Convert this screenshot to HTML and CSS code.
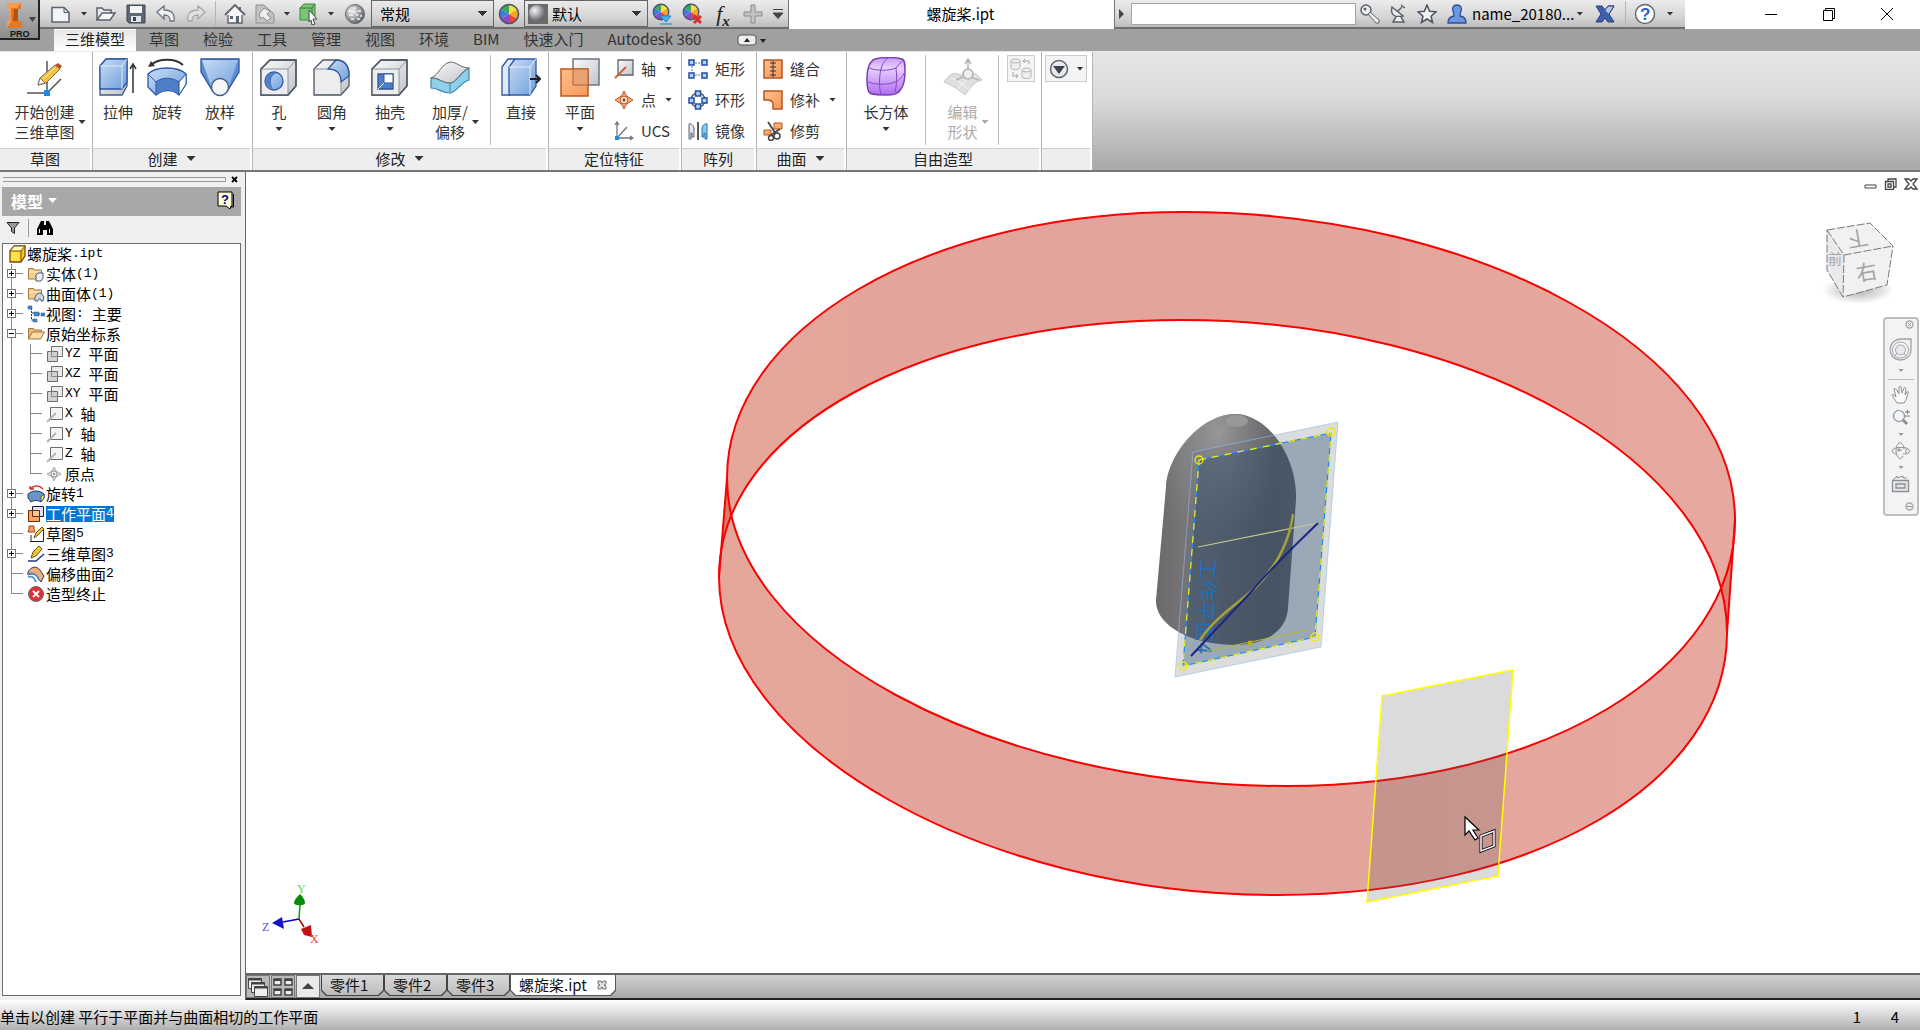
FILE: index.html
```
<!DOCTYPE html>
<html lang="zh-CN">
<head>
<meta charset="utf-8">
<title>螺旋桨.ipt</title>
<link rel="stylesheet" href="styles.css">
</head>
<body>
<svg class="defs" width="0" height="0" aria-hidden="true">
  <defs>
    <linearGradient id="gBlue" x1="0" y1="0" x2="1" y2="1"><stop offset="0" stop-color="#c9dcf3"/><stop offset="1" stop-color="#6f9fdb"/></linearGradient>
    <linearGradient id="gGrey" x1="0" y1="0" x2="1" y2="1"><stop offset="0" stop-color="#fbfbfb"/><stop offset="1" stop-color="#bfc3c9"/></linearGradient>
    <linearGradient id="gOrange" x1="0" y1="0" x2="1" y2="1"><stop offset="0" stop-color="#ffbe8a"/><stop offset="1" stop-color="#f5995a"/></linearGradient>
    <linearGradient id="gPurple" x1="0" y1="0" x2="0" y2="1"><stop offset="0" stop-color="#c79af5"/><stop offset=".3" stop-color="#e6d0ff"/><stop offset="1" stop-color="#b06cf0"/></linearGradient>
    <radialGradient id="gBall" cx=".35" cy=".35" r=".7"><stop offset="0" stop-color="#f4f4f4"/><stop offset="1" stop-color="#5c6066"/></radialGradient>
    <symbol id="wheel" viewBox="0 0 22 22"><circle cx="11" cy="11" r="9.5" fill="#fff"/><path d="M11 11V1.500A9.500 9.500 0 0 0 2.800 6.200z" fill="#3fa55b"/><path d="M11 11 2.800 6.200A9.500 9.500 0 0 0 2.800 15.800z" fill="#3c7ee0"/><path d="M11 11 2.800 15.800A9.500 9.500 0 0 0 11 20.500z" fill="#8a4bd0"/><path d="M11 11V20.500A9.500 9.500 0 0 0 19.200 15.800z" fill="#ea4535"/><path d="M11 11 19.200 15.800A9.500 9.500 0 0 0 19.200 6.200z" fill="#f6a623"/><path d="M11 11 19.200 6.200A9.500 9.500 0 0 0 11 1.500z" fill="#f7e03c"/><circle cx="11" cy="11" r="9.500" fill="none" stroke="#4a5568" stroke-width="1.600"/></symbol>
    <symbol id="folder" viewBox="0 0 18 18"><path d="M1.500 14V3.500h5l1 1.500h7V14z" fill="#f4cd8b" stroke="#a07848"/><path d="M2 7h12" stroke="#fff0cf"/></symbol>
    <symbol id="plane-s" viewBox="0 0 18 18"><path d="M5.500 1.500h11v10h-11z" fill="#ececec" stroke="#6d6d6d"/><path d="M1.500 6.500h10v10h-10z" fill="#d2d2d2" stroke="#6d6d6d"/><path d="M5.500 6.500v5h6" fill="none" stroke="#8a8a8a"/></symbol>
    <symbol id="axis-s" viewBox="0 0 18 18"><path d="M4.500 2.500h12v12h-12z" fill="#f4f4f4" stroke="#6d6d6d"/><path d="M1 17 10 8" stroke="#b5b5b5" stroke-width="2"/></symbol>
  </defs>
</svg>

<div class="app">
  <header class="top">
    <button class="app-btn" aria-label="应用程序菜单">
      <svg width="36" height="38" viewBox="0 0 36 38"><path d="M7 3h14v6h-3v12h4v7H7v-7h3V9H7z" fill="#e87722"/><path d="M7 3h14l-4 5h-6v14l-4 6v-7h3V9H7z" fill="#f89a4e"/><path d="M14 9h4v12h-5z" fill="#b9500f"/><path d="M29 17h7l-3.500 5z" fill="#444"/><text x="10" y="37" class="pro">PRO</text></svg>
    </button>
    <div class="titlebar">
      <div class="qat">
        <button class="ic wide" aria-label="新建"><svg width="20" height="20"><path d="M1 3.500h12l5 5V18H1z" fill="#f2f4f6" stroke="#5b6270" stroke-width="1.500"/><path d="M13 3.500v5h5" fill="none" stroke="#5b6270"/></svg></button>
        <button class="ic car" aria-label="新建选项"><i class="caret sm"></i></button>
        <button class="ic" aria-label="打开"><svg width="22" height="20"><path d="M2 16V4h5l2 2h7v3" fill="#e8eaee" stroke="#5b6270" stroke-width="1.500"/><path d="M2 16 7 9h13l-5 7z" fill="#f8f8f8" stroke="#5b6270" stroke-width="1.500"/></svg></button>
        <button class="ic" aria-label="保存"><svg width="20" height="20"><path d="M1 1h18v18H3l-2-2z" fill="#5d6674" stroke="#3d4450"/><path d="M4 2h12v7H4z" fill="#f4f5f7"/><path d="M5 12h10v6H5z" fill="#e2e5e9"/><path d="M7 13h3v4H7z" fill="#3d4450"/></svg></button>
        <button class="ic" aria-label="撤消"><svg width="20" height="20"><path d="M1 8 8 2v4c8 0 11 4 10 11h-4c0-5-2-6-6-6v4z" fill="#f2f2f2" stroke="#6b7280" stroke-width="1.300"/></svg></button>
        <button class="ic" aria-label="重做"><svg width="20" height="20"><path d="M19 8 12 2v4C4 6 1 10 2 17h4c0-5 2-6 6-6v4z" fill="#e2e2e2" stroke="#a5a8ad" stroke-width="1.300"/></svg></button>
        <span class="vsep"></span>
        <button class="ic" aria-label="主页"><svg width="22" height="20"><path d="M4 10v9h14v-9" fill="#f5f5f5" stroke="#5b6270" stroke-width="1.400"/><path d="M1 11 11 1l10 10M16 3v4" fill="#f5f5f5" stroke="#5b6270" stroke-width="1.800"/><path d="M12 12h3v7h-3zM6 12h3v3H6z" fill="#5b6270"/></svg></button>
        <button class="ic" aria-label="更新"><svg width="20" height="20"><path d="M1 1h8l10 9v9H1z" fill="#c2c2c2" stroke="#909090"/><path d="m4 10 5-6 6 3-3 3 4 4-4 3-4-4-2 2z" fill="#eee" stroke="#8a8a8a"/></svg></button>
        <button class="ic car" aria-label="更新选项"><i class="caret sm"></i></button>
        <button class="ic" aria-label="选择"><svg width="20" height="22"><path d="M1 5 5 1h11v12l-3 4H1z" fill="#7cc576" stroke="#3a8a3a"/><path d="M1 5h12v12M13 5l3-4" fill="none" stroke="#2f7a35"/><path d="m10 7 8 9h-4l2 5-3 1-1-5-2 2z" fill="#fff" stroke="#444"/></svg></button>
        <button class="ic car" aria-label="选择选项"><i class="caret sm"></i></button>
        <button class="ic wide" aria-label="材料"><svg width="22" height="22"><circle cx="11" cy="11" r="9.500" fill="url(#gBall)" stroke="#646a73"/><path d="M4 8h3m2-3h3m2 3h3M5 12h4m3 0h2m2 1h2M7 16h3m3 0h3M10 9h2" stroke="#f3f3f3" stroke-width="1.500"/></svg></button>
        <select class="combo" aria-label="材料"><option>常规</option></select>
        <button class="ic" aria-label="外观"><svg width="22" height="22"><use href="#wheel"/></svg></button>
        <span class="swatch"><svg width="20" height="20"><path d="M0 0h20v20H0z" fill="#6a6a6a"/><circle cx="9" cy="9" r="8" fill="url(#gBall)"/></svg></span>
        <select class="combo second" aria-label="外观"><option>默认</option></select>
        <button class="ic" aria-label="调整"><svg width="22" height="22"><use href="#wheel" width="18" height="18"/><path d="M8 13h11l-5 6zM8 21h12" fill="#49b4e6" stroke="#1a84c0"/></svg></button>
        <button class="ic" aria-label="清除"><svg width="22" height="22"><use href="#wheel" width="18" height="18"/><path d="m12 13 7 7m0-7-7 7" stroke="#d3302c" stroke-width="3"/></svg></button>
        <button class="ic fx" aria-label="参数"><em>f<sub>x</sub></em></button>
        <button class="ic" aria-label="添加"><svg width="20" height="20"><path d="M8 1h4v7h7v4h-7v7H8v-7H1V8h7z" fill="#c3c3c3" stroke="#8a8a8a"/></svg></button>
        <button class="ic more" aria-label="自定义"><svg width="12" height="12"><path d="M1 1.500h10M1 5h10l-5 5.500z" fill="#444" stroke="#444"/></svg></button>
      </div>
      <h1>螺旋桨.ipt</h1>
      <div class="info">
        <svg class="tri" width="6" height="10"><path d="M0 0v10l5-5z" fill="#444"/></svg>
        <input type="text" aria-label="搜索">
        <button class="ic" aria-label="密钥"><svg width="20" height="20"><circle cx="6" cy="6" r="5" fill="#eee" stroke="#5b6270" stroke-width="1.500"/><circle cx="5" cy="5" r="1.500" fill="#5b6270"/><path d="m8 10 8 9h3v-3L10 8z" fill="#eee" stroke="#5b6270"/></svg></button>
        <button class="ic" aria-label="通讯中心"><svg width="20" height="20"><path d="M4 3c-2 8 3 11 11 9zM9 8l5-5M13 1l4 3" fill="#eee" stroke="#5b6270" stroke-width="1.500"/><path d="m8 13-3 5h11l-3-5" fill="#eee" stroke="#5b6270" stroke-width="1.500"/></svg></button>
        <button class="ic" aria-label="收藏夹"><svg width="20" height="20"><path d="m10 1 2.600 6.300 6.400.5-5 4.400 1.600 6.300L10 15l-5.600 3.500L6 12.200 1 7.800l6.400-.5z" fill="#f3f3f3" stroke="#4b5362" stroke-width="1.500"/></svg></button>
        <button class="ic" aria-label="用户"><svg width="20" height="20"><path d="M10 1c4 0 5 3 4 6-.5 2-1 3-1 5 4 .5 6 3 6 7H1c0-4 2-6.500 6-7 0-2-.5-3-1-5-1-3 0-6 4-6z" fill="#6d97e0" stroke="#2e4f93" stroke-width="1.300"/></svg></button>
        <button class="user">name_20180...<i class="caret sm"></i></button>
        <button class="ic wide" aria-label="Exchange"><svg width="20" height="20"><path d="M1 2h6l3 4 3-4h6l-5 8 5 8h-6l-3-4-3 4H1l5-8z" fill="#3c5fae" stroke="#2a3f78"/><path d="m10 6 3-4h6l-5 8" fill="#b9c6e4" stroke="#2a3f78"/></svg></button>
        <span class="vsep"></span>
        <button class="ic" aria-label="帮助"><svg width="22" height="22"><circle cx="11" cy="11" r="9.500" fill="#fff" stroke="#5b6270" stroke-width="1.400"/><text x="6" y="17" class="q">?</text></svg></button>
        <button class="ic more" aria-label="帮助选项"><i class="caret sm"></i></button>
      </div>
      <div class="winbtns">
        <button aria-label="最小化"><svg width="14" height="14"><path d="M1 7.500h12" stroke="#000"/></svg></button>
        <button aria-label="还原"><svg width="14" height="14"><path d="M1.500 3.500h9v10h-9zM3.500 3V1.500h9v10H11" fill="none" stroke="#000"/></svg></button>
        <button aria-label="关闭"><svg width="14" height="14"><path d="m1 1 12 12m0-12L1 13" stroke="#000"/></svg></button>
      </div>
    </div>
    <nav class="tabs">
      <button class="on">三维模型</button><button>草图</button><button>检验</button><button>工具</button><button>管理</button><button>视图</button><button>环境</button><button>BIM</button><button>快速入门</button><button>Autodesk 360</button>
      <button class="mini" aria-label="最小化功能区"><svg width="36" height="14"><rect x="5" y="2" width="18" height="10" rx="3" fill="#eee" stroke="#555"/><path d="m11 9 3-4 3 4zM27 6h6l-3 4z" fill="#222"/></svg></button>
    </nav>
  </header>

  <section class="ribbon">
    <div class="panel p1">
      <div class="body">
        <button class="big"><svg width="40" height="40"><path d="M22 4v34M2 36h20L36 22" fill="none" stroke="#555" stroke-width="1.500"/><path d="m13 28 2-7L30 8l5 4-14 14z" fill="#f5c243" stroke="#7b6a4a"/><path d="m30 8 3-2 4 3-2 3z" fill="#b5532e"/><path d="m13 28 2-7 5 5z" fill="#fff" stroke="#7b6a4a"/><path d="m18 22 12-11" stroke="#fff0b0"/><path d="M19 33h6v6h-6z" fill="#1e88e5"/></svg><span class="cap"><span>开始创建<br>三维草图</span><i class="caret sm"></i></span></button>
      </div>
      <div class="foot">草图</div>
    </div>
    <div class="panel p2">
      <div class="body">
        <button class="big"><svg width="40" height="40"><path d="m2 9 6-7h21v27l-5 9H2z" fill="url(#gGrey)" stroke="#3c5a8e" stroke-width="1.300"/><path d="m2 9 6-7h21v23l-5 7H2z" fill="url(#gBlue)" stroke="#2f56a3" stroke-width="1.300"/><path d="M2 9h22v23M24 9l5-7" fill="none" stroke="#dceafb"/><path d="M35 36V8m-3 4 3-5 3 5" fill="none" stroke="#333" stroke-width="1.500"/></svg><span class="cap">拉伸</span></button>
        <button class="big"><svg width="40" height="40"><path d="M4 8C12 1 28 1 36 8" fill="none" stroke="#333" stroke-width="2"/><path d="m1 10 3-6 4 5z" fill="#333"/><path d="M1 17c8-8 30-8 38 0v10l-7 11c-6-6-16-6-23 0L1 30z" fill="url(#gBlue)" stroke="#2f56a3" stroke-width="1.300"/><path d="m9 25 c6-5 16-5 23 0v13c-6-6-16-6-23 0z" fill="#4f7fc8"/><path d="m1 17 8 8c6-5 16-5 23 0l7-8M9 25v13m23-13v13" fill="none" stroke="#2f56a3"/><path d="m32 25 7-8v10l-7 11z" fill="#fff" stroke="#2f56a3"/></svg><span class="cap">旋转</span></button>
        <button class="big"><svg width="40" height="40"><path d="M1 2h38v13L28 33H12L1 15z" fill="#5f8fd3" stroke="#2f56a3" stroke-width="1.300"/><path d="m2 3 10 29h16L38 3z" fill="url(#gBlue)"/><circle cx="20" cy="30" r="8.500" fill="#f6f6f6" stroke="#3c5a8e" stroke-width="1.300"/></svg><span class="cap">放样</span><i class="caret sm"></i></button>
      </div>
      <div class="foot">创建<i class="caret"></i></div>
    </div>
    <div class="panel p3">
      <div class="body">
        <button class="big"><svg width="40" height="40"><path d="m2 12 9-9h26v26l-8 9H2z" fill="url(#gGrey)" stroke="#4d5666" stroke-width="1.300"/><path d="M2 12h27v26H2z" fill="#ededee"/><path d="M2 12h27v26M29 12l8-9" fill="none" stroke="#8b93a0"/><path d="m2 12 9-9h26v26l-8 9H2z" fill="none" stroke="#4d5666" stroke-width="1.300"/><circle cx="15" cy="24" r="9" fill="url(#gBlue)" stroke="#2f56a3" stroke-width="1.300"/><path d="M8 19a9 9 0 0 1 10-3c-6 2-8 8-4 16-6-1-9-8-6-13z" fill="#4f7fc8"/></svg><span class="cap">孔</span><i class="caret sm"></i></button>
        <button class="big"><svg width="40" height="40"><path d="M2 12 11 3h13c8 0 13 5 13 14v12l-8 9H2z" fill="url(#gGrey)" stroke="#4d5666" stroke-width="1.300"/><path d="M3 12h13c9 0 13 6 13 13v12H3z" fill="#ededee"/><path d="M16 12 24 3c9 0 13 6 13 16l-8 6c0-8-4-13-13-13z" fill="url(#gBlue)" stroke="#2f56a3" stroke-width="1.300"/><path d="M2 12h14M29 25v13" stroke="#8b93a0"/></svg><span class="cap">圆角</span><i class="caret sm"></i></button>
        <button class="big"><svg width="40" height="40"><path d="m2 12 9-9h26v26l-8 9H2z" fill="url(#gGrey)" stroke="#4d5666" stroke-width="1.300"/><path d="M2 12h27v26H2z" fill="#ededee"/><path d="M2 12h27v26M29 12l8-9" fill="none" stroke="#8b93a0"/><path d="m2 12 9-9h26v26l-8 9H2z" fill="none" stroke="#4d5666" stroke-width="1.300"/><path d="M8 17h15v15H8z" fill="#4f7fc8" stroke="#2f56a3" stroke-width="1.300"/><path d="M14 17h9v9h-9z" fill="#fff" stroke="#2f56a3"/><path d="m8 32 6-6" stroke="#fff"/></svg><span class="cap">抽壳</span><i class="caret sm"></i></button>
        <button class="big"><svg width="40" height="40"><path d="M1 21c7-1 11 5 19 5 7-1 10-11 19-15v12c-8 2-12 12-19 13-8 0-12-5-19-5z" fill="#8fcfea" stroke="#3f87ad" stroke-width="1.200"/><path d="M1 21C9 18 11 7 20 5c7 0 11 6 19 6-9 4-12 14-19 15-8 0-12-6-19-5z" fill="url(#gGrey)" stroke="#666"/><path d="M20 26v10" stroke="#3f87ad"/></svg><span class="cap"><span>加厚/<br>偏移</span><i class="caret sm"></i></span></button>
        <span class="rule"></span>
        <button class="big"><svg width="40" height="40"><path d="m1 10 6-8h7v28l-5 8H1z" fill="#dfeaf8" stroke="#2f56a3" stroke-width="1.300"/><path d="m8 10 6-8h21v27l-6 9H8z" fill="url(#gBlue)" stroke="#2f56a3" stroke-width="1.300"/><path d="M8 10h21v28M29 10l6-8" fill="none" stroke="#e5effb"/><path d="M29 22h9m-3-4 4 4-4 4" fill="none" stroke="#222" stroke-width="2"/></svg><span class="cap">直接</span></button>
      </div>
      <div class="foot">修改<i class="caret"></i></div>
    </div>
    <div class="panel p4">
      <div class="body">
        <button class="big"><svg width="40" height="40"><path d="M13 2h26v26H13z" fill="url(#gGrey)" stroke="#6c7684" stroke-width="1.500"/><path d="M1 12h27v27H1z" fill="url(#gOrange)" stroke="#c0561c" stroke-width="1.500"/><path d="M13 12h15v16H13z" fill="#e9a273" stroke="#a5623c"/></svg><span class="cap">平面</span><i class="caret sm"></i></button>
        <div class="smalls">
          <button class="small"><svg width="20" height="20"><path d="M4 1h15v15H4z" fill="url(#gGrey)" stroke="#5b6270" stroke-width="1.300"/><path d="M1 19 12 8" stroke="#d0632a" stroke-width="2"/></svg>轴<i class="caret sm"></i></button>
          <button class="small"><svg width="20" height="20"><path d="m10 1 2.500 5L19 10l-6.500 4L10 19l-2.500-5L1 10l6.500-4z" fill="#f4b183" stroke="#c0561c"/><circle cx="10" cy="10" r="4" fill="#fbe0cc" stroke="#c0561c"/><circle cx="10" cy="10" r="1.500" fill="#8c3c10"/></svg>点<i class="caret sm"></i></button>
          <button class="small"><svg width="20" height="20"><path d="M3 1v16h16M3 17 13 6M1 4l2-3 2 3m11 11 3 2-3 2" fill="none" stroke="#6c7684" stroke-width="1.300"/><path d="M1 15h4v4H1z" fill="#1e88e5"/></svg>UCS</button>
        </div>
      </div>
      <div class="foot">定位特征</div>
    </div>
    <div class="panel p5">
      <div class="body">
        <div class="smalls">
          <button class="small"><svg width="20" height="20"><path d="M4 4h12M4 4v12h12" fill="none" stroke="#777" stroke-dasharray="2 1"/><path d="M1 1h5v5H1zM14 1h5v5h-5zM1 14h5v5H1zM14 14h5v5h-5z" fill="#b8d0f4" stroke="#1f4fae" stroke-width="1.500"/></svg>矩形</button>
          <button class="small"><svg width="20" height="20"><circle cx="10" cy="10" r="7" fill="none" stroke="#555" stroke-width="1.500"/><path d="M7.500 1h5v5h-5zM1 8h5v5H1zM14 8h5v5h-5zM7.500 14h5v5h-5z" fill="#b8d0f4" stroke="#1f4fae" stroke-width="1.500"/></svg>环形</button>
          <button class="small"><svg width="20" height="20"><path d="M1 3c2-1 4 1 5 4v9H4v-4H3v6H1z" fill="#e2e4e7" stroke="#5b6270"/><path d="M19 3c-2-1-4 1-5 4v9h2v-4h1v6h2z" fill="#8ec9f0" stroke="#1f6fae"/><path d="M10 1v18" stroke="#222" stroke-width="1.500"/></svg>镜像</button>
        </div>
      </div>
      <div class="foot">阵列</div>
    </div>
    <div class="panel p6">
      <div class="body">
        <div class="smalls">
          <button class="small"><svg width="20" height="20"><path d="M1 1h18v18H1z" fill="url(#gOrange)" stroke="#b5561f" stroke-width="1.500"/><path d="M10 2v16M7 4h6M7 8h6M7 12h6M7 16h6" stroke="#333"/></svg>缝合</button>
          <button class="small"><svg width="20" height="20"><path d="M1 1h18v18h-9v-6c-1-2-3-3-5-3H1z" fill="url(#gOrange)" stroke="#b5561f" stroke-width="1.500"/></svg>修补<i class="caret sm"></i></button>
          <button class="small"><svg width="20" height="20"><path d="M11 2h8v6h-8zM1 9h7v5H1z" fill="url(#gOrange)" stroke="#b5561f"/><path d="m5 1 8 12M17 8 8 14" stroke="#444" stroke-width="1.800"/><circle cx="14" cy="15" r="3" fill="none" stroke="#444" stroke-width="1.500"/><circle cx="8" cy="17" r="2.500" fill="none" stroke="#444" stroke-width="1.500"/></svg>修剪</button>
        </div>
      </div>
      <div class="foot">曲面<i class="caret"></i></div>
    </div>
    <div class="panel p7">
      <div class="body">
        <button class="big"><svg width="40" height="40"><path d="M9 2c8-2 20-2 27 0 3 1 3 6 3 12s-1 14-4 18c-3 5-7 6-15 6S5 38 3 35 1 28 1 22 2 5 9 2z" fill="url(#gPurple)" stroke="#7a3fb5" stroke-width="1.500"/><path d="M2 25c8 3 20 3 27 0 5-2 8-6 9-9M15 38c-2-8-2-18 0-26 1-5 4-9 7-11M29 35c2-8 2-16 1-24M3 11c8 3 20 3 27 0l6-7" fill="none" stroke="#8748c4"/></svg><span class="cap">长方体</span><i class="caret sm"></i></button>
        <span class="rule"></span>
        <button class="big edit" disabled><svg width="40" height="40"><path d="M1 25c5-7 9-10 14-8 5 3 14-1 18 0l6 6c-7 1-12 8-17 15C16 33 9 28 1 25z" fill="#dfdfdf" stroke="#c3c3c3"/><path d="M8 21c7 2 13 6 18 12M15 33c3-7 10-12 18-14" fill="none" stroke="#f6f6f6"/><path d="M25 14V3m-3 4 3-5 3 5M20 20l-7 3m15-3 8 3" fill="none" stroke="#b5b5b5" stroke-width="1.500"/><circle cx="25" cy="17" r="5" fill="#eee" stroke="#b0b0b0" stroke-width="1.500"/></svg><span class="cap"><span>编辑<br>形状</span><i class="caret sm"></i></span></button>
        <span class="rule"></span>
        <button class="tile" disabled aria-label="转换"><svg width="24" height="24"><g fill="#eee" stroke="#b5b5b5"><path d="M2 4v7c1 2 8 2 9 0V4M13 13v7c1 2 8 2 9 0v-7"/><ellipse cx="6.500" cy="4" rx="4.500" ry="2"/><ellipse cx="17.500" cy="13" rx="4.500" ry="2"/><path d="M20 7V4h-6m2-2-2 2 2 2M4 15v4h5m-2-2 2 2-2 2" fill="none" stroke="#a5a5a5"/></g></svg></button>
      </div>
      <div class="foot">自由造型</div>
    </div>
    <div class="panel p8">
      <div class="body">
        <button class="tile wide" aria-label="更多"><svg width="20" height="20"><circle cx="10" cy="10" r="8.500" fill="#e8eaed" stroke="#5b6270" stroke-width="1.500"/><path d="M4 7h12l-6 8z" fill="#3d4450"/></svg><i class="caret sm"></i></button>
      </div>
      <div class="foot"></div>
    </div>
  </section>

  <main class="work">
    <aside class="side">
      <div class="grip"><span></span><button aria-label="关闭"><svg width="7" height="7"><path d="m1 1 5 5m0-5L1 6" stroke="#000" stroke-width="1.800"/></svg></button></div>
      <div class="side-head"><button>模型<i class="caret"></i></button><button aria-label="帮助"><svg width="18" height="19"><path d="M1 1h14v14h-1l-1 3-4-3H1z" fill="#ffffd0" stroke="#000"/><path d="M16.500 3v13h-3" fill="none" stroke="#000"/><text x="4" y="13" class="hq">?</text></svg></button></div>
      <div class="side-tools"><button aria-label="筛选器"><svg width="14" height="14"><path d="M1 1.500h12L8.500 7v5.500l-3-2V7z" fill="#9a9a9a" stroke="#222"/></svg></button><span></span><button aria-label="查找"><svg width="16" height="14"><path d="M4 0h3v4h2V0h3l4 8v6h-6V9H6v5H0V8z" fill="#000"/><path d="M2.500 8v4M12.500 8v4" stroke="#fff"/></svg></button></div>
      <div class="tree">
        <div class="row root"><svg width="18" height="18"><path d="m2 6 4-5h11v10l-4 6H2z" fill="#f8c81c" stroke="#7a4a10" stroke-width="1.300"/><path d="M2 6h11l4-5H6z" fill="#fff7c0" stroke="#7a4a10"/><path d="M3 7h9v9H3z" fill="#ffe14a"/><path d="M13 6v11" stroke="#7a4a10"/></svg>螺旋桨<b>.ipt</b></div>
        <ul>
          <li><div class="row"><button class="tog" aria-label="展开"></button><svg width="18" height="18"><use href="#folder"/><path d="m9 10 2-2h5v5l-2 3H9z" fill="#e6eef8" stroke="#4a5a70"/></svg>实体<b>(1)</b></div></li>
          <li><div class="row"><button class="tog" aria-label="展开"></button><svg width="18" height="18"><use href="#folder"/><path d="M8 16c-1-5 2-8 6-8l3 4-1 4h-2c0-3-3-3-3 0z" fill="#cfd6df" stroke="#4a5a70"/></svg>曲面体<b>(1)</b></div></li>
          <li><div class="row"><button class="tog" aria-label="展开"></button><svg width="18" height="18"><path d="M4.500 3v12H7M5 8h4M11 9h4" fill="none" stroke="#333" stroke-dasharray="2 1"/><path d="M1 1h4v3H1zM7 7h5v4H7zM14 8h4v3h-4zM6 14h4v3H6z" fill="#3f86cc" stroke="#2a5a90" stroke-width=".5"/></svg>视图<b>: </b>主要</div></li>
          <li><div class="row"><button class="tog open" aria-label="折叠"></button><svg width="18" height="18"><path d="M1.500 14V3.500h5l1 1.500h7v3" fill="#e9bf77" stroke="#a07848"/><path d="m1.500 14 4-7h12l-4 7z" fill="#fbdda3" stroke="#a07848"/></svg>原始坐标系</div>
            <ul>
              <li><div class="row"><svg width="18" height="18"><use href="#plane-s"/></svg><b>YZ </b>平面</div></li>
              <li><div class="row"><svg width="18" height="18"><use href="#plane-s"/></svg><b>XZ </b>平面</div></li>
              <li><div class="row"><svg width="18" height="18"><use href="#plane-s"/></svg><b>XY </b>平面</div></li>
              <li><div class="row"><svg width="18" height="18"><use href="#axis-s"/></svg><b>X </b>轴</div></li>
              <li><div class="row"><svg width="18" height="18"><use href="#axis-s"/></svg><b>Y </b>轴</div></li>
              <li><div class="row"><svg width="18" height="18"><use href="#axis-s"/></svg><b>Z </b>轴</div></li>
              <li><div class="row"><svg width="18" height="18"><path d="m8 2 2 4 5 3-5 3-2 4-2-4-5-3 5-3z" fill="#ddd" stroke="#aaa"/><circle cx="8" cy="9" r="3" fill="#eee" stroke="#999"/><circle cx="8" cy="9" r="1" fill="#777"/></svg>原点</div></li>
            </ul>
          </li>
          <li><div class="row"><button class="tog" aria-label="展开"></button><svg width="18" height="18"><path d="M3 4c4-4 9-4 13 0M3 4V1m0 3h4" fill="none" stroke="#e02020" stroke-width="1.300"/><path d="M1 9c4-4 12-4 16 0v4l-3 4c-3-2-7-2-10 0l-3-4z" fill="#6b93c4" stroke="#1e3a66"/><path d="m14 12 3-3v4l-3 4z" fill="#ffe94a" stroke="#1e3a66" stroke-width=".7"/></svg>旋转<b>1</b></div></li>
          <li><div class="row"><button class="tog" aria-label="展开"></button><svg width="18" height="18"><path d="M5.500 1.500h11v10h-11z" fill="#dfe2f2" stroke="#1a1a40"/><path d="M1.500 5.500h11v11h-11z" fill="#f7a468" stroke="#6b2c00"/><path d="M5.500 5.500h7v6h-7z" fill="#f7c49c" stroke="#6b2c00"/></svg><span class="sel">工作平面<b>4</b></span></div></li>
          <li><div class="row"><svg width="18" height="18"><path d="M3 16.500h13.500V3M4 10v6" fill="none" stroke="#223"/><path d="m7 13 2-5 6-6 2 2-6 6z" fill="#f4c52e" stroke="#665522"/><path d="M2 1h5v3l1 3H1l1-3z" fill="#f0a060" stroke="#b3401c"/></svg>草图<b>5</b></div></li>
          <li><div class="row"><button class="tog" aria-label="展开"></button><svg width="18" height="18"><path d="M1 16h8l8-7" fill="none" stroke="#223a80" stroke-width="1.500"/><path d="m4 13 2-6 6-6 3 3-6 7z" fill="#f4c52e" stroke="#665522"/></svg>三维草图<b>3</b></div></li>
          <li><div class="row"><svg width="18" height="18"><path d="M1 7c3-6 9-6 12-2l4 6-3 6-3-4C9 9 6 8 1 10z" fill="#f2ac78" stroke="#1e3a66"/><path d="M1 12c4-1 6 0 8 5M1 9c6-2 9 1 11 6" fill="none" stroke="#4a90c8" stroke-width="1.800"/></svg>偏移曲面<b>2</b></div></li>
          <li><div class="row"><svg width="18" height="18"><circle cx="9" cy="9" r="7.500" fill="#e03038" stroke="#6b6b6b"/><path d="m6 6 6 6m0-6-6 6" stroke="#fff" stroke-width="2"/></svg>造型终止</div></li>
        </ul>
      </div>
    </aside>

    <section class="doc">
      <div class="canvas">
        <svg class="scene" viewBox="246 172 1674 801" role="img" aria-label="三维视图">
          <defs>
            <linearGradient id="gBody" x1="0" x2="1"><stop offset="0" stop-color="#6c696c"/><stop offset=".2" stop-color="#777578"/><stop offset=".6" stop-color="#646468"/><stop offset=".85" stop-color="#5c5d62"/><stop offset="1" stop-color="#66676b"/></linearGradient>
            <radialGradient id="gDome" cx=".45" cy=".08" r=".5"><stop offset="0" stop-color="#a3a3a5" stop-opacity=".8"/><stop offset="1" stop-color="#8a8a8c" stop-opacity="0"/></radialGradient>
            <linearGradient id="gRing" x1="0" x2="1"><stop offset="0" stop-color="#cc4f37"/><stop offset=".35" stop-color="#c4483a"/><stop offset=".6" stop-color="#c84b38"/><stop offset="1" stop-color="#cf5440"/></linearGradient>
            <radialGradient id="gShade"><stop offset="0" stop-color="#777" stop-opacity=".6"/><stop offset="1" stop-color="#777" stop-opacity="0"/></radialGradient>
          </defs>
          <g fill="url(#gRing)" fill-opacity=".5">
            <path d="M727 478C727 330 924 212 1184 212 1479 212 1735 352 1735 520L1727 633C1727 465 1477 320 1182 320 922 320 719 429 719 577z"/>
            <path d="M727 478C727 646 991 786 1286 786 1546 786 1735 668 1735 520L1727 633C1727 781 1537 895 1277 895 982 895 719 745 719 577z"/>
          </g>
          <g fill="none" stroke="#fa0000" stroke-width="2">
            <path d="M727 478C727 330 924 212 1184 212 1479 212 1735 352 1735 520 1735 668 1546 786 1286 786 991 786 727 646 727 478z"/>
            <path d="M719 577C719 429 922 320 1182 320 1477 320 1727 465 1727 633 1727 781 1537 895 1277 895 982 895 719 745 719 577z"/>
            <path d="M727 478 719 577M1735 520 1727 633"/>
          </g>
          <path d="M1235 414C1202 414 1168 453 1166 487L1156 600C1155 625 1190 645 1236 645 1266 645 1287 630 1288 608L1296 500C1298 458 1268 414 1235 414z" fill="url(#gBody)"/>
          <path d="M1235 414C1202 414 1168 453 1166 487L1156 600C1155 625 1190 645 1236 645 1266 645 1287 630 1288 608L1296 500C1298 458 1268 414 1235 414z" fill="url(#gDome)"/>
          <ellipse cx="1237" cy="421" rx="11" ry="6" fill="#98989a"/>
          <path fill-rule="evenodd" d="M1193 452 1338 422 1321 647 1175 677zM1199 460 1183 666 1315 637 1331 433z" fill="#6b6b6e" fill-opacity=".24"/>
          <path d="M1193 452 1338 422 1321 647 1175 677z" fill="none" stroke="#8fbfec" stroke-opacity=".6"/>
          <path d="M1199 460 1331 433 1315 637 1183 666z" fill="#2e4a66" fill-opacity=".48" stroke="#1e88ff" stroke-width="1.200"/>
          <path d="M1199 460 1331 433 1315 637 1183 666z" fill="none" stroke="#f4f400" stroke-width="1.200" stroke-dasharray="7 6"/>
          <text class="plane-label" transform="translate(1201 558) rotate(93)">工作平面4</text>
          <g fill="none" stroke="#f0ec00" stroke-width="1.300"><circle cx="1199" cy="460" r="4"/><circle cx="1331" cy="432" r="4"/><circle cx="1315" cy="637" r="4"/><circle cx="1183" cy="666" r="4"/></g>
          <path d="M1198 547 1318 523" stroke="#c2c98c" stroke-width="1.200"/>
          <path d="M1207 651 1308 630" stroke="#b9bb2e"/>
          <path d="M1293 514C1288 552 1268 575 1255 588 1240 602 1215 617 1200 640" fill="none" stroke="#a0a23a" stroke-width="2.500"/>
          <circle cx="1250" cy="643" r="2.500" fill="#b9b400"/>
          <path d="M1318 523C1288 552 1265 575 1251 592L1191 656" fill="none" stroke="#1d2586" stroke-width="2"/>
          <path d="M1382 696 1513 670 1498 876 1367 902z" fill="#5d5d5d" fill-opacity=".22" stroke="#ffff00" stroke-width="1.500"/>
          <path d="M1465 817v18l4-4 6 9 3-2-5-8h6z" fill="#fff" stroke="#000" stroke-width="1.200"/>
          <path d="m1481 836 13-5v15l-13 5z" fill="none" stroke="#000" stroke-width="3"/><path d="m1481 836 13-5v15l-13 5z" fill="none" stroke="#fff" stroke-width="1.500"/>
          <g class="triad">
            <path d="M299 919 300 904" stroke="#00a000" stroke-width="1.500"/><path d="M300 894c3 3 5 6 5 9s-11 3-11 0 3-6 6-9z" fill="#0a8a0a"/>
            <path d="m299 919-16 3" stroke="#0000c0" stroke-width="1.500"/><path d="m272 923 10-6 2 12z" fill="#1414c8"/>
            <path d="m299 919 5 8" stroke="#b00000" stroke-width="1.500"/><path d="m301 929 10-4 1 12-8-2z" fill="#c01414"/>
            <text x="297" y="893" fill="#4ce04c">Y</text><text x="262" y="931" fill="#5050e8">Z</text><text x="310" y="943" fill="#f04040">X</text>
          </g>
          <ellipse cx="1858" cy="290" rx="36" ry="14" fill="url(#gShade)"/>
          <path d="M1827 230 1870 223 1893 246 1887 285 1843 297 1827 270z" fill="#f1f1f2"/>
          <path d="M1827 230 1844 255 1843 297 1827 270z" fill="#e9eaec"/>
          <path d="M1827 230 1870 223 1893 246 1887 285 1843 297 1827 270zM1827 230 1844 255 1893 246M1844 255 1843 297" fill="none" stroke="#77797c" stroke-dasharray="8 2"/>
          <g class="cube"><text x="1856" y="280" transform="rotate(-10 1866 272)">右</text><text x="1848" y="245" transform="rotate(170 1858 238)">下</text><text class="tiny" x="1828" y="264">前</text></g>
        </svg>
        <div class="mdi">
          <button aria-label="最小化"><svg width="14" height="12"><path d="M1 7h11v3H1z" fill="#fff" stroke="#444"/></svg></button>
          <button aria-label="还原"><svg width="14" height="12"><path d="M1.500 3.500h8v8h-8zM4 3V1h8v8h-2M4 6h3v3H4z" fill="none" stroke="#444" stroke-width="1.300"/></svg></button>
          <button aria-label="关闭"><svg width="14" height="12"><path d="M1 1h4l2 2 2-2h4l-4 5 4 5H9L7 9l-2 2H1l4-5z" fill="#fff" stroke="#444" stroke-width="1.300"/></svg></button>
        </div>
        <div class="navbar">
          <button class="end" aria-label="关闭"><svg width="9" height="9"><circle cx="4.500" cy="4.500" r="3.500" fill="#eee" stroke="#aaa" stroke-width="1.500"/><path d="m3 3 3 3m0-3L3 6" stroke="#999"/></svg></button>
          <button class="whl" aria-label="导航控制盘"><svg width="24" height="24"><path d="M12 1h10v12A10.500 10.500 0 1 1 12 1z" fill="#eef0f3" stroke="#a2a4a7" stroke-width="1.300"/><circle cx="11.500" cy="12" r="8" fill="#f7f7f7" stroke="#a2a4a7"/><circle cx="11.500" cy="12" r="5" fill="#e6eaf0" stroke="#a2a4a7"/><path d="m6 18 2-3m9 3-2-3" stroke="#a2a4a7"/></svg></button>
          <i class="caret sm"></i><hr>
          <button aria-label="平移"><svg width="20" height="20"><path d="M6 18c-2-3-4-6-5-8 1-1 2 0 4 2L3 4c1-1 2 0 3 1l2 4V2c1-1 2-1 2 0l1 6 2-5c1-1 2 0 2 1l-1 6 2-3c1-1 2 0 1 1-1 5-2 7-4 10z" fill="#fafafa" stroke="#8d8f92"/></svg></button>
          <button class="zm" aria-label="缩放"><svg width="20" height="20"><circle cx="8" cy="8" r="5.500" fill="#eef4fa" stroke="#8d8f92" stroke-width="1.200"/><path d="m12 12 4 4" stroke="#8d8f92" stroke-width="3"/><path d="M14 4h5m-2.500-2v4M14 8h5" stroke="#777"/></svg></button>
          <i class="caret sm"></i>
          <button aria-label="动态观察"><svg width="20" height="20"><path d="M8 17C4 14 4 5 8 2c3-1 5 3 5 6M12 15c-1 2-2 3-4 3M5 13C0 12 0 8 5 7s11-1 13 2-2 4-6 4M8 6v5m-2-2h5m4-1v4" fill="none" stroke="#8d8f92"/></svg></button>
          <i class="caret sm"></i>
          <button aria-label="观察方向"><svg width="20" height="20"><path d="M1.500 6.500h16v11h-16zM5 10h9v4H5z" fill="#e4e7ec" stroke="#8d8f92" stroke-width="1.300"/><path d="m2 6 4-4v2l6-2v2h4" fill="none" stroke="#8d8f92"/></svg></button>
          <button class="end" aria-label="自定义"><svg width="9" height="9"><circle cx="4.500" cy="4.500" r="3.500" fill="#eee" stroke="#aaa" stroke-width="1.500"/><path d="M2 4.500h5" stroke="#999"/></svg></button>
        </div>
      </div>
      <div class="doctabs">
        <button class="box dk" aria-label="层叠"><svg width="22" height="22"><g fill="#eceef0" stroke="#444"><path d="M1.500 2.500h13v10h-13z"/><path d="M4.500 6.500h13v10h-13z"/><path d="M7.500 10.500h13v10h-13z"/></g><path d="M1 3.500h14M4 7.500h14M7 11.500h14" stroke="#444" stroke-width="2"/></svg></button>
        <button class="box dk" aria-label="平铺"><svg width="22" height="22"><g fill="#eceef0" stroke="#444" stroke-width="1.500"><path d="M2 3h7v6H2zM13 3h7v6h-7zM2 13h7v6H2zM13 13h7v6h-7z"/></g><path d="M2 4h7m4 0h7M2 14h7m4 0h7" stroke="#444" stroke-width="2"/></svg></button>
        <button class="box" aria-label="展开"><svg width="14" height="14"><path d="M1 9h12L7 3z" fill="#444"/></svg></button>
        <button class="tab">零件1</button><button class="tab">零件2</button><button class="tab">零件3</button>
        <div class="tab cur"><button>螺旋桨.ipt</button><button aria-label="关闭文档"><svg width="10" height="10"><path d="M1 1h3l1 2 1-2h3v3L7 5l2 1v3H6L5 7 4 9H1V6l2-1-2-1z" fill="#ddd" stroke="#777"/></svg></button></div>
      </div>
    </section>
  </main>

  <footer class="status"><span>单击以创建 平行于平面并与曲面相切的工作平面</span><span class="n">1</span><span class="n">4</span></footer>
</div>
</body>
</html>
```
FILE: styles.css
```
* { box-sizing: border-box; }
html, body { height: 100%; margin: 0; }
body { font: 15px/20px "Noto Sans CJK SC", sans-serif; color: #222; background: #fff; overflow: hidden; }
button, select, input { font: inherit; color: inherit; margin: 0; }
button { background: none; border: 0; padding: 0; white-space: nowrap; }
svg { display: block; flex: none; }
.defs { position: absolute; }
.app { height: 100%; min-height: 600px; display: flex; flex-direction: column; }

.caret { width: 9px; height: 5px; background: #333; clip-path: polygon(0 0, 100% 0, 50% 100%); flex: none; }
.caret.sm { width: 7px; height: 4px; }

/* title bar and tabs */
.top { display: grid; grid-template: 29px 22px / 40px 1fr; background: #a0a0a0; }
.app-btn { grid-row: 1 / 3; height: 40px; border: solid #222; border-width: 0 2px 2px 0; background: linear-gradient(#bbb, #8c8c8c); overflow: hidden; }
.pro { font: bold 9px "Liberation Sans", sans-serif; fill: #111; }
.titlebar { display: flex; background: #fff; }
.qat, .info { display: flex; align-items: center; background: linear-gradient(#ececec, #d6d6d6 60%, #bdbdbd); border-bottom: 2px solid #6e6e6e; flex: none; }
.qat { width: 749px; padding-left: 4px; border-right: 1px solid #777; }
.ic { width: 30px; height: 26px; display: flex; align-items: center; justify-content: center; flex: none; }
.ic.car { width: 14px; }
.ic.more { width: 20px; }
.ic.wide { width: 33px; }
.vsep { width: 1px; height: 26px; background: #b5b5b5; margin: 0 4px; }
.combo { appearance: none; flex: none; width: 123px; height: 27px; border: 1px solid #666; border-radius: 0; padding: 0 0 0 8px; line-height: 24px; color: #000; background: conic-gradient(from -45deg at 50% 100%, #333 90deg, transparent 0) no-repeat right 6px center / 9px 5px; }
.combo.second { width: 100px; border-left: 0; padding-left: 4px; }
.swatch { flex: none; display: flex; align-items: center; height: 27px; width: 24px; padding-left: 3px; border: 1px solid #666; border-right: 0; }
.fx { font: 22px/22px "Liberation Serif", serif; }
.fx sub { font-size: 15px; font-weight: bold; line-height: 0; }
.titlebar h1 { flex: 1; margin: 0; padding-left: 18px; text-align: center; font-size: 15px; font-weight: 400; line-height: 28px; color: #000; }
.info { width: 571px; padding-left: 4px; border-left: 1px solid #777; }
.info input { width: 225px; height: 22px; margin: 0 0 0 6px; border: 1px solid #a5a5a5; background: #fff; padding: 0 4px; }
.info .ic:nth-child(3), .info .ic:nth-child(4) { width: 28px; }
.user { display: flex; align-items: center; gap: 2px; width: 116px; color: #000; }
.q { font: bold 17px "Liberation Sans", sans-serif; fill: #2d62c9; }
.winbtns { width: 235px; display: flex; padding-left: 57px; }
.winbtns button { width: 58px; display: flex; align-items: center; justify-content: center; padding-bottom: 1px; }
.tabs { display: flex; padding-left: 14px; }
.tabs button { padding: 0 12px 3px; line-height: 18px; color: #333; }
.tabs .on { margin-right: 1px; padding: 0 11px 4px; background: linear-gradient(#e6e6e6, #fff); border-top: 1px solid #fff; line-height: 16px; color: #222; }
.tabs .mini { margin-left: 12px; padding: 0 8px; }

/* ribbon */
.ribbon { display: flex; height: 121px; padding-top: 1px; background: linear-gradient(#e6e6e6, #dadada 40%, #a8a8a8); border-bottom: 2px solid #777; flex: none; overflow: hidden; }
.panel { display: flex; flex-direction: column; background: #fff; border-right: 1px solid #b5b5b5; flex: none; }
.panel .body { flex: 1; display: grid; align-items: start; justify-content: start; }
.foot { height: 22px; display: flex; align-items: center; justify-content: center; gap: 9px; background: #eee; border-top: 1px solid #ccc; margin-right: 2px; padding-bottom: 2px; }
.p1 { width: 93px; } .p1 .body { grid-template-columns: 100px; }
.p2 { width: 160px; } .p2 .body { grid-template-columns: 50px 48px 58px; }
.p3 { width: 296px; } .p3 .body { grid-template-columns: 52px 54px 62px 69px 1px 60px; }
.p4 { width: 133px; } .p4 .body { grid-template-columns: 62px 70px; }
.p5 { width: 75px; }
.p6 { width: 90px; }
.p7 { width: 195px; } .p7 .body { grid-template-columns: 78px 1px 72px 1px 40px; }
.p8 { width: 51px; }
.big { display: flex; flex-direction: column; align-items: center; padding-top: 5px; overflow: visible; min-width: 0; }
.cap { display: flex; align-items: center; gap: 4px; margin-top: 5px; line-height: 20px; color: #333; }
.big > .caret { margin-top: 5px; }
.p1 .big svg { margin-right: 10px; }
.p3 .big:nth-child(4) svg, .edit svg { margin-right: 11px; }
.edit { padding-left: 12px; }
.rule { width: 1px; height: 90px; margin-top: 3px; background: #bbb; }
button:disabled .cap { color: #aaa; }
button:disabled .caret { background: #aaa; }
.smalls { display: flex; flex-direction: column; padding: 1px 0 0 3px; }
.p5 .smalls, .p6 .smalls { padding-left: 6px; }
.small { display: flex; align-items: center; height: 31px; gap: 7px; color: #333; }
.small .caret { margin-left: 2px; }
.tile { display: flex; align-items: center; justify-content: center; gap: 8px; width: 28px; height: 27px; margin: 3px 0 0 8px; border: 1px solid #ccc; background: #f4f4f4; }
.tile.wide { width: 42px; margin-left: 3px; }

/* work area */
.work { flex: 1; display: grid; grid-template-columns: 245px minmax(0, 1fr); min-height: 0; }
.side { display: flex; flex-direction: column; background: #f0f0f0; padding: 2px 4px 4px 2px; min-height: 0; }
.grip { height: 13px; display: flex; align-items: center; gap: 5px; padding: 0 3px 2px 0; }
.grip span { flex: 1; height: 5px; margin-left: 1px; border: solid #999; border-width: 1px 1px 1px 0; }
.side-head { height: 29px; margin-bottom: 2px; display: flex; align-items: center; justify-content: space-between; padding: 0 6px 2px 9px; background: #a8a8a8; color: #fff; font-size: 16px; font-weight: bold; }
.side-head button { display: flex; align-items: center; gap: 5px; }
.side-head .caret { background: #fff; }
.hq { font: bold 13px "Liberation Sans", sans-serif; fill: #00009c; }
.side-tools { height: 25px; display: flex; align-items: center; gap: 8px; padding: 0 0 5px 4px; }
.side-tools span { width: 1px; height: 18px; background: #999; }
.tree { flex: 1; border: 1px solid #6e6e6e; background: #fff; color: #000; font-size: 15px; overflow: hidden; }
.tree b { font: 13px/20px "Liberation Mono", monospace; white-space: pre; }
.tree ul { list-style: none; margin: 0; padding: 0; }
.row { display: flex; align-items: center; height: 20px; position: relative; }
.row svg { margin-right: 1px; }
.root { padding-left: 5px; }
.tree li { position: relative; }
.tree li > .row { padding-left: 24px; }
.tree li li > .row { padding-left: 43px; }
.tree li::before { content: ""; position: absolute; left: 8px; top: 0; bottom: 0; width: 1px; background: #888; }
.tree li:last-child::before { bottom: auto; height: 10px; }
.tree li li::before { left: 27px; }
.tree li .row::before { content: ""; position: absolute; left: 8px; top: 9px; width: 12px; height: 1px; background: #888; }
.tree li li .row::before { left: 27px; }
.tog { position: absolute; left: 4px; top: 5px; width: 9px; height: 9px; border: 1px solid #777; background: linear-gradient(#000, #000) no-repeat center / 5px 1px, linear-gradient(#000, #000) no-repeat center / 1px 5px, #fff; }
.tog.open { background: linear-gradient(#000, #000) no-repeat center / 5px 1px, #fff; }
.sel { background: #0078d7; color: #fff; height: 16px; line-height: 16px; display: flex; align-items: center; }

.doc { display: flex; flex-direction: column; border-left: 1px solid #666; min-height: 0; min-width: 0; }
.canvas { flex: 1; position: relative; min-height: 0; background: #fff; }
.scene { width: 100%; height: 100%; }
.plane-label { font-size: 21px; fill: #1f6fb8; }
.triad text { font: 12px "Liberation Serif", serif; }
.cube text { font: 21px "Noto Sans CJK SC", sans-serif; fill: #a4a4a6; }
.cube .tiny { font-size: 14px; }
.mdi { position: absolute; top: 6px; right: 2px; display: flex; gap: 6px; }
.navbar { position: absolute; top: 145px; right: 1px; width: 36px; height: 199px; display: flex; flex-direction: column; align-items: center; padding: 1px 0 3px; border: 2px solid #bebebe; border-radius: 4px; background: #f3f3f3; }
.navbar .caret { background: #999; width: 5px; height: 3px; margin: 7px 0; }
.navbar .end { align-self: flex-end; margin-right: 3px; }
.navbar .whl { margin-top: 9px; }
.navbar hr { width: 26px; height: 1px; margin: 0 0 5px; border: 0; background: #bbb; }
.navbar .zm { margin-top: 3px; }
.navbar .zm + .caret, .navbar .caret:nth-of-type(3) { margin: 5px 0; }
.navbar .end:last-child { margin-top: auto; }

.doctabs { height: 27px; display: flex; align-items: flex-start; background: linear-gradient(#d0d0d0, #a8a8a8); border-top: 2px solid #666; border-bottom: 2px solid #222; flex: none; }
.box { width: 24px; height: 23px; margin-right: 1px; display: flex; align-items: center; justify-content: center; border: 1px solid #777; background: #e9eaec; }
.dk { background: #b9b9b9; }
.tab { width: 63px; height: 21px; padding: 0 0 2px 9px; text-align: left; line-height: 17px; color: #111; background: #444; clip-path: polygon(0 0, 100% 0, 100% 75%, calc(100% - 5px) 100%, 5px 100%, 0 75%); position: relative; isolation: isolate; }
.tab::before { content: ""; position: absolute; inset: 0 1px 1px; background: linear-gradient(#dadada, #bbb); clip-path: inherit; z-index: -1; }
.tab.cur { width: 106px; display: flex; align-items: center; gap: 10px; background: #555; }
.tab.cur::before { background: #fff; }
.status { height: 30px; display: flex; align-items: center; padding-top: 4px; background: linear-gradient(#fff, #e0e0e0 40%, #b0b0b0); color: #000; flex: none; }
.status span:first-child { flex: 1; }
.n { width: 38px; text-align: center; }
.status .n:last-child { margin-right: 6px; }
```
